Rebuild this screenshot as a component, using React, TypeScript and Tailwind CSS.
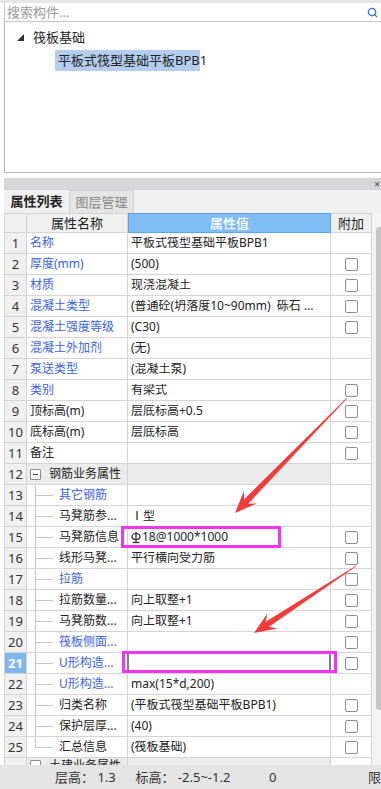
import { Search } from "lucide-react";

interface Row {
  n: number;
  name: string;
  value?: string;
  blue?: boolean;
  check?: boolean;
  tree?: boolean;
  last?: boolean;
  group?: boolean;
  kind?: "rebar" | "input";
}

const rows: Row[] = [
  { n: 1, name: "名称", value: "平板式筏型基础平板BPB1", blue: true },
  { n: 2, name: "厚度(mm)", value: "(500)", blue: true, check: true },
  { n: 3, name: "材质", value: "现浇混凝土", blue: true, check: true },
  { n: 4, name: "混凝土类型", value: "(普通砼(坍落度10~90mm)  砾石 ...", blue: true, check: true },
  { n: 5, name: "混凝土强度等级", value: "(C30)", blue: true, check: true },
  { n: 6, name: "混凝土外加剂", value: "(无)", blue: true },
  { n: 7, name: "泵送类型", value: "(混凝土泵)", blue: true },
  { n: 8, name: "类别", value: "有梁式", blue: true, check: true },
  { n: 9, name: "顶标高(m)", value: "层底标高+0.5", check: true },
  { n: 10, name: "底标高(m)", value: "层底标高", check: true },
  { n: 11, name: "备注", check: true },
  { n: 12, name: "钢筋业务属性", group: true },
  { n: 13, name: "其它钢筋", blue: true, tree: true },
  { n: 14, name: "马凳筋参...", value: "Ⅰ型", tree: true },
  { n: 15, name: "马凳筋信息", tree: true, check: true, kind: "rebar" },
  { n: 16, name: "线形马凳...", value: "平行横向受力筋", tree: true, check: true },
  { n: 17, name: "拉筋", blue: true, tree: true, check: true },
  { n: 18, name: "拉筋数量...", value: "向上取整+1", tree: true, check: true },
  { n: 19, name: "马凳筋数...", value: "向上取整+1", tree: true, check: true },
  { n: 20, name: "筏板侧面...", blue: true, tree: true, check: true },
  { n: 21, name: "U形构造...", blue: true, tree: true, check: true, kind: "input" },
  { n: 22, name: "U形构造...", value: "max(15*d,200)", blue: true, tree: true },
  { n: 23, name: "归类名称", value: "(平板式筏型基础平板BPB1)", tree: true, check: true },
  { n: 24, name: "保护层厚...", value: "(40)", tree: true, check: true },
  { n: 25, name: "汇总信息", value: "(筏板基础)", tree: true, last: true, check: true },
];

function arrowPoints(x1: number, y1: number, x2: number, y2: number) {
  const dx = x2 - x1;
  const dy = y2 - y1;
  const len = Math.hypot(dx, dy);
  const ux = dx / len;
  const uy = dy / len;
  const nx = -uy;
  const ny = ux;
  const head = 22;
  const hw = 9;
  const sw = 3;
  const tw = 0.4;
  const bx = x2 - ux * head;
  const by = y2 - uy * head;
  const kx = x2 - ux * (head - 6);
  const ky = y2 - uy * (head - 6);
  const p = [
    [x1 + nx * tw, y1 + ny * tw],
    [kx + nx * sw, ky + ny * sw],
    [bx + nx * hw, by + ny * hw],
    [x2, y2],
    [bx - nx * hw, by - ny * hw],
    [kx - nx * sw, ky - ny * sw],
    [x1 - nx * tw, y1 - ny * tw],
  ];
  return p.map((q) => q.join(",")).join(" ");
}

function Checkbox() {
  return <div className="w-[13px] h-[13px] border border-[#8c8c8c] rounded-[2px] bg-white" />;
}

function TreeLines({ last }: { last?: boolean }) {
  return (
    <svg width="30" height="21" className="shrink-0">
      <line x1="8.5" y1="0" x2="8.5" y2={last ? 10.5 : 21} stroke="#c4c4c4" />
      <line x1="8.5" y1="10.5" x2="26" y2="10.5" stroke="#c4c4c4" />
    </svg>
  );
}

function RebarGlyph() {
  return (
    <svg width="10" height="13" viewBox="0 0 10 13" className="shrink-0 mr-[1px]">
      <ellipse cx="5" cy="5.5" rx="4" ry="3" fill="none" stroke="#222" strokeWidth="1.2" />
      <line x1="5" y1="1" x2="5" y2="11" stroke="#222" strokeWidth="1.2" />
      <line x1="1.5" y1="11.5" x2="8.5" y2="11.5" stroke="#222" strokeWidth="1.2" />
    </svg>
  );
}

function PropRow({ row }: { row: Row }) {
  const active = row.n === 21;
  return (
    <div className="grid grid-cols-[22px_101px_203px_41px] h-[21px] shrink-0">
      <div
        className={
          active
            ? "border-r border-b border-[#d4d4d4] bg-[#7db6f0] text-white font-bold flex items-center justify-center text-[13px]"
            : "border-r border-b border-[#d4d4d4] bg-[#f0f0f0] text-[#333] flex items-center justify-center text-[13px]"
        }
      >
        {row.n}
      </div>
      <div
        className={
          row.group
            ? "border-r border-b border-[#d4d4d4] bg-[#ebebeb] flex items-center"
            : "border-r border-b border-[#d4d4d4] flex items-center overflow-hidden"
        }
      >
        {row.group && (
          <>
            <div className="ml-[3px] w-[11px] h-[11px] border border-[#8c8c8c] rounded-[1px] bg-white flex items-center justify-center">
              <div className="w-[5px] h-px bg-[#444]" />
            </div>
            <span className="ml-[8px] text-[#222]">{row.name}</span>
          </>
        )}
        {row.tree && <TreeLines last={row.last} />}
        {!row.group && (
          <span
            className={
              row.blue
                ? "whitespace-nowrap text-[#3b62e4] " + (row.tree ? "ml-[2px]" : "ml-[3px]")
                : "whitespace-nowrap text-[#222] " + (row.tree ? "ml-[2px]" : "ml-[3px]")
            }
          >
            {row.name}
          </span>
        )}
      </div>
      <div
        className={
          row.group
            ? "border-r border-b border-[#d4d4d4] bg-[#ebebeb]"
            : "relative border-r border-b border-[#d4d4d4] flex items-center"
        }
      >
        {row.value && (
          <span className="ml-[3px] whitespace-pre overflow-hidden text-[#222]">{row.value}</span>
        )}
        {row.kind === "rebar" && (
          <>
            <div className="ml-[3px] flex items-center text-[#222]">
              <RebarGlyph />
              <span>18@1000*1000</span>
            </div>
            <div className="absolute z-10 left-[-7px] top-[-1px] w-[160px] h-[22px] border-[3px] border-[#f035f0]" />
          </>
        )}
        {row.kind === "input" && (
          <>
            <div className="absolute left-[-1px] top-[-1px] right-[-1px] bottom-[1px] border-2 border-[#7e7e7e] bg-white" />
            <div className="absolute z-10 left-[-6px] top-[-2px] w-[215px] h-[22px] border-[3px] border-[#f035f0]" />
          </>
        )}
      </div>
      <div className="border-r border-b border-[#d4d4d4] bg-white flex items-center justify-center">
        {row.check && <Checkbox />}
      </div>
    </div>
  );
}

export default function App() {
  return (
    <div className="relative w-[381px] h-[789px] overflow-hidden bg-white font-['Noto_Sans','Noto_Sans_CJK_SC',sans-serif] text-[12px] leading-none flex flex-col">
      {/* top strip */}
      <div className="h-[3px] bg-[#e6e6e6] shrink-0" />

      {/* search */}
      <div className="ml-[4px] h-[19px] shrink-0 border-l border-b border-[#c6c6c6] flex items-center justify-between pl-[2px] pr-[3px]">
        <span className="text-[#9a9a9a] text-[13px]">搜索构件...</span>
        <Search size={11} strokeWidth={3} className="text-[#2f7ad6]" />
      </div>

      {/* tree */}
      <div className="ml-[4px] h-[151px] shrink-0 border-l border-b border-[#b4b4b4] flex flex-col">
        <div className="mt-[5px] h-[21px] flex items-center">
          <svg width="7" height="7" className="ml-[12px]">
            <polygon points="0,7 7,7 7,0" fill="#333" />
          </svg>
          <span className="ml-[9px] text-[#222] text-[13px]">筏板基础</span>
        </div>
        <div className="mt-[2px] ml-[50px] w-[145px] h-[21px] bg-[#b3cdef] flex items-center pl-[3px]">
          <span className="text-[#222] text-[13px] whitespace-nowrap">平板式筏型基础平板BPB1</span>
        </div>
      </div>

      <div className="h-[5px] shrink-0" />

      {/* panel title bar */}
      <div className="ml-[4px] h-[12px] shrink-0 bg-[#d6d6d8] flex items-center justify-end pr-[1px]">
        <span className="text-[10px] text-[#444]">×</span>
      </div>

      {/* tabs */}
      <div className="ml-[4px] h-[23px] shrink-0 bg-[#f0f0f0] flex">
        <div className="w-[65px] flex items-center justify-center font-bold text-[13px] text-[#222]">属性列表</div>
        <div className="w-[65px] flex items-center justify-center text-[13px] text-[#8a8a8a] bg-[#e4e4e4] border-x border-t border-[#d2d2d2]">
          图层管理
        </div>
      </div>

      {/* table + scrollbar */}
      <div className="ml-[4px] flex-1 min-h-0 flex overflow-hidden">
        <div className="border-l border-[#d4d4d4] flex flex-col">
          <div className="grid grid-cols-[22px_101px_203px_41px] h-[20px] shrink-0">
            <div className="border-t border-r border-b border-[#d4d4d4] bg-[#f0f0f0]" />
            <div className="border-t border-r border-b border-[#d4d4d4] bg-[#f0f0f0] flex items-center justify-center text-[13px] text-[#222]">
              属性名称
            </div>
            <div className="border border-[#5ea4ec] bg-[#80bcf6] flex items-center justify-center text-[13px] text-white font-medium">
              属性值
            </div>
            <div className="border-t border-r border-b border-[#d4d4d4] bg-[#f0f0f0] flex items-center justify-center text-[13px] text-[#222]">
              附加
            </div>
          </div>
          {rows.map((r) => (
            <PropRow key={r.n} row={r} />
          ))}
          <div className="grid grid-cols-[22px_101px_203px_41px] h-[21px] shrink-0">
            <div className="border-r border-[#d4d4d4] bg-[#f0f0f0]" />
            <div className="border-r border-[#d4d4d4] bg-[#ebebeb] flex items-start pt-[2px]">
              <div className="ml-[3px] w-[11px] h-[11px] border border-[#8c8c8c] rounded-[1px] bg-white" />
              <span className="ml-[8px] text-[#222]">土建业务属性</span>
            </div>
            <div className="border-r border-[#d4d4d4] bg-[#ebebeb]" />
            <div className="border-r border-[#d4d4d4]" />
          </div>
        </div>
        <div className="flex-1 bg-[#f3f3f3] pt-[14px]">
          <div className="ml-[4px] h-[483px] rounded-l-[3px] bg-[#c6c6c6]" />
        </div>
      </div>

      {/* status bar */}
      <div className="h-[24px] shrink-0 bg-[#e4e4e4] flex items-center text-[13px] text-[#333] whitespace-nowrap">
        <span className="ml-[55px] w-[82px]">层高： 1.3</span>
        <span className="w-[136px]">标高： -2.5~-1.2</span>
        <span className="w-[101px]">0</span>
        <span>限</span>
      </div>

      {/* annotations */}
      <svg width="381" height="789" className="absolute left-0 top-0 pointer-events-none">
        <polygon points={arrowPoints(347, 398, 235, 513)} fill="#f23c3c" />
        <polygon points={arrowPoints(356, 566, 254, 633)} fill="#f23c3c" />
      </svg>
    </div>
  );
}
